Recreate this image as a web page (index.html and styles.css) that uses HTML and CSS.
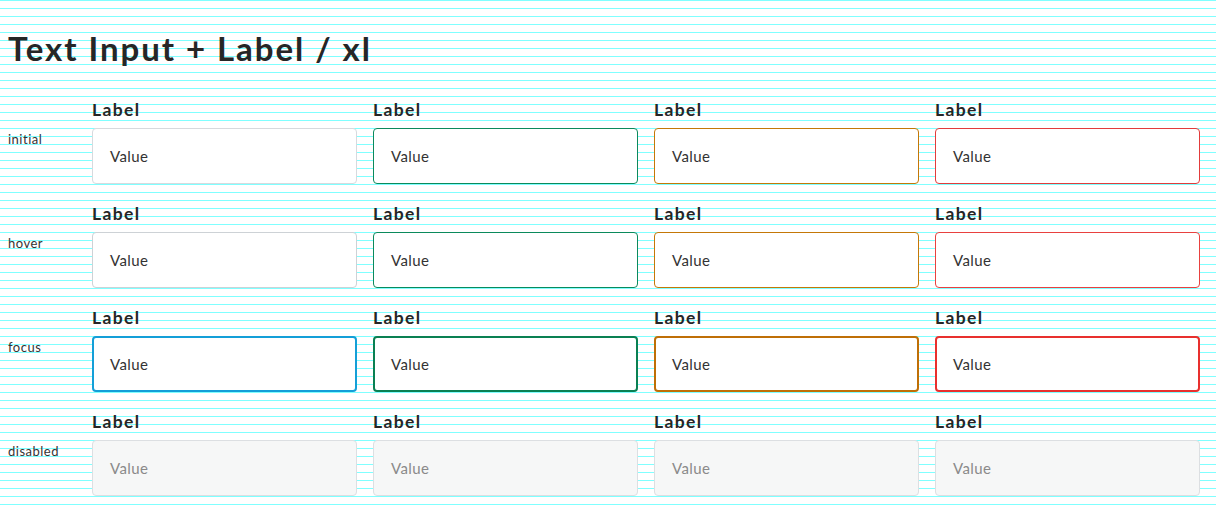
FILE: index.html
```html
<!DOCTYPE html>
<html lang="en">
<head>
<meta charset="utf-8">
<title>Text Input + Label / xl</title>
<link rel="stylesheet" href="styles.css">
</head>
<body>
<h1 class="title">Text Input + Label / xl</h1>
<div class="grid">
  <div class="state">initial</div>
  <div class="field"><label class="label">Label</label><div class="input">Value</div></div>
  <div class="field"><label class="label">Label</label><div class="input success">Value</div></div>
  <div class="field"><label class="label">Label</label><div class="input warning">Value</div></div>
  <div class="field"><label class="label">Label</label><div class="input error">Value</div></div>

  <div class="state">hover</div>
  <div class="field"><label class="label">Label</label><div class="input hover">Value</div></div>
  <div class="field"><label class="label">Label</label><div class="input success hover">Value</div></div>
  <div class="field"><label class="label">Label</label><div class="input warning hover">Value</div></div>
  <div class="field"><label class="label">Label</label><div class="input error hover">Value</div></div>

  <div class="state">focus</div>
  <div class="field"><label class="label">Label</label><div class="input focus">Value</div></div>
  <div class="field"><label class="label">Label</label><div class="input success focus">Value</div></div>
  <div class="field"><label class="label">Label</label><div class="input warning focus">Value</div></div>
  <div class="field"><label class="label">Label</label><div class="input error focus">Value</div></div>

  <div class="state">disabled</div>
  <div class="field"><label class="label">Label</label><div class="input disabled">Value</div></div>
  <div class="field"><label class="label">Label</label><div class="input disabled">Value</div></div>
  <div class="field"><label class="label">Label</label><div class="input disabled">Value</div></div>
  <div class="field"><label class="label">Label</label><div class="input disabled">Value</div></div>
</div>
</body>
</html>
```

FILE: styles.css
```css
html {
  background: repeating-linear-gradient(to bottom, #80ffff 0, #80ffff 1px, #ffffff 1px, #ffffff 8px);
}
body {
  margin: 0;
  padding: 0 8px;
  font-family: "Lato", "Noto Sans", sans-serif;
  color: #262626;
}
.title {
  margin: 0;
  padding-top: 28px;
  height: 96px;
  box-sizing: border-box;
  font-size: 33px;
  line-height: 40px;
  font-weight: 700;
  letter-spacing: 1.95px;
  color: #262626;
}
.grid {
  display: grid;
  grid-template-columns: 68px repeat(4, 265px);
  column-gap: 16px;
  row-gap: 16px;
}
.state {
  padding-top: 35px;
  font-size: 13px;
  line-height: 16px;
  letter-spacing: 0.5px;
  color: #333;
}
.field {
  display: flex;
  flex-direction: column;
  gap: 4px;
}
.label {
  font-size: 17.5px;
  line-height: 28px;
  font-weight: 700;
  letter-spacing: 1.4px;
  color: #262626;
}
.input {
  box-sizing: border-box;
  height: 56px;
  display: flex;
  align-items: center;
  padding: 0 17px;
  background: #fff;
  border: 1px solid #d6dade;
  border-radius: 4px;
  font-size: 15px;
  letter-spacing: 0.4px;
  color: #333;
}
.input.success { border-color: #0b8a5c; }
.input.warning { border-color: #c47808; }
.input.error { border-color: #e23b3b; }
.input.hover { border-color: #cdd2d6; }
.input.success.hover { border-color: #0b8a5c; }
.input.warning.hover { border-color: #c47808; }
.input.error.hover { border-color: #e8413f; }
.input.focus {
  border-width: 2px;
  padding: 0 16px;
  border-color: #149fd8;
}
.input.success.focus { border-color: #0a8052; }
.input.warning.focus { border-color: #bf6f06; }
.input.error.focus { border-color: #e8302e; }
.input.disabled {
  background: #f6f7f7;
  border-color: #dcdfe2;
  color: #8a8a8a;
}
```
